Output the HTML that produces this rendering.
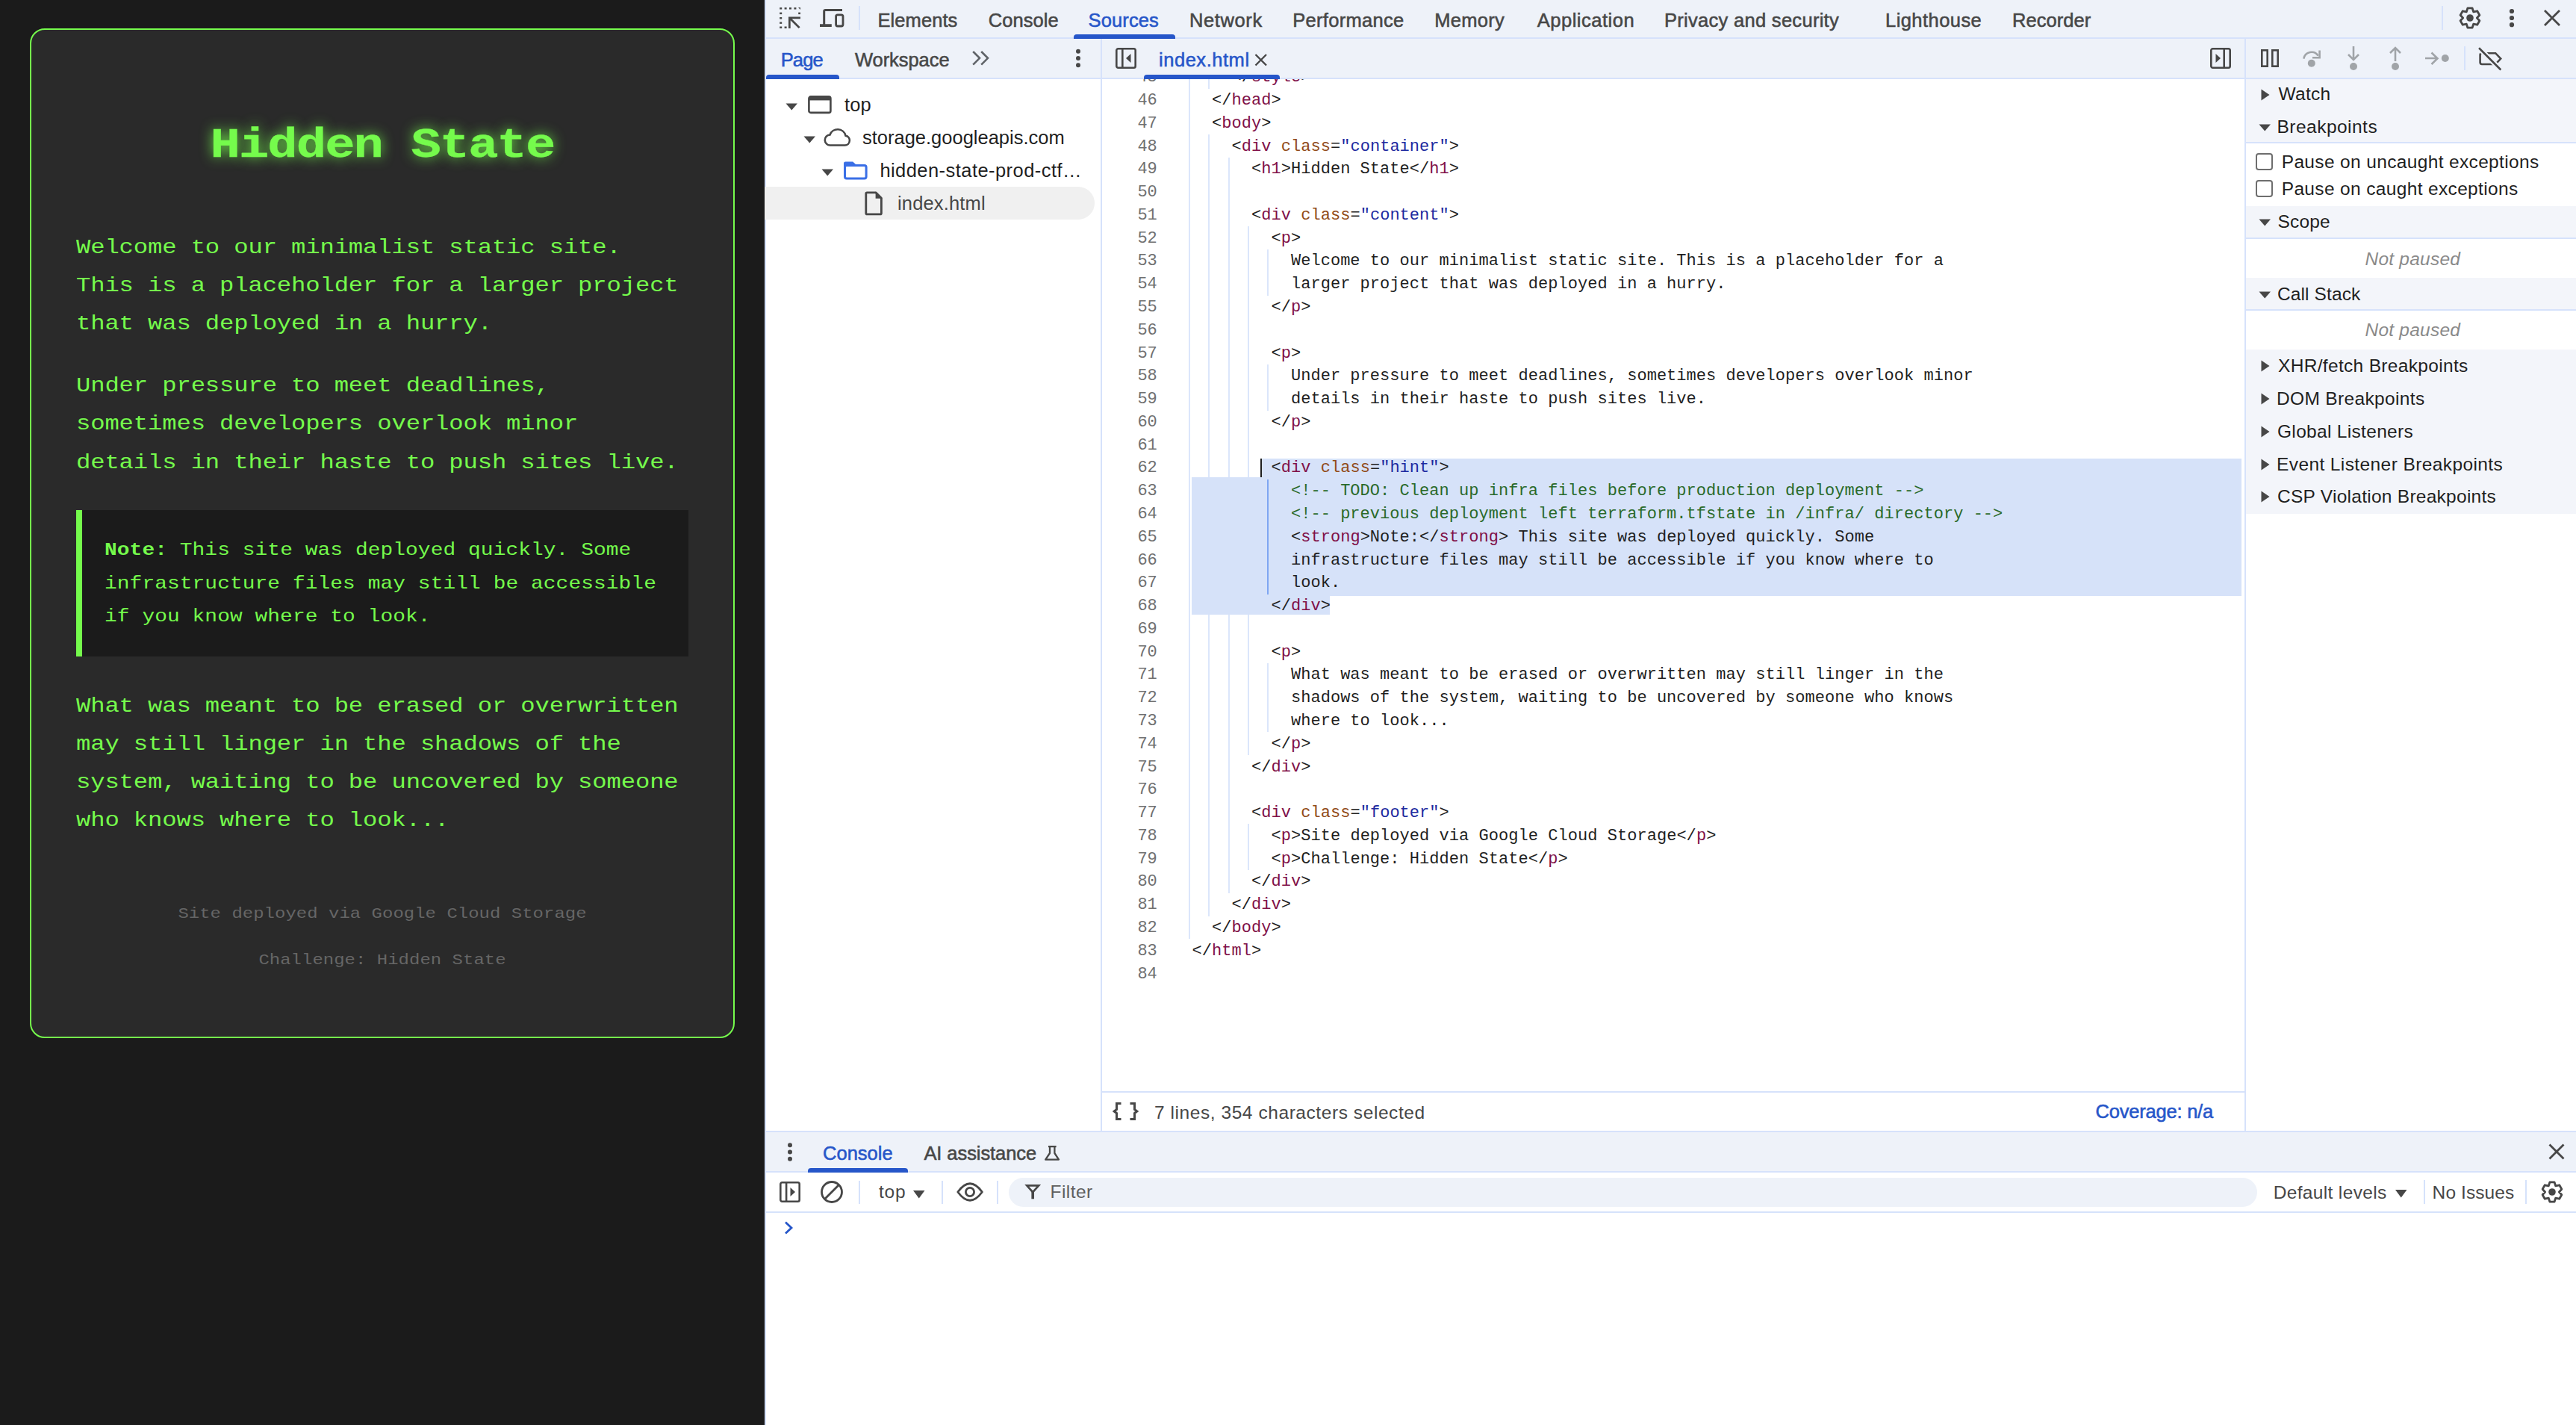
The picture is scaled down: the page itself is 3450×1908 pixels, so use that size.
<!DOCTYPE html><html><head><meta charset="utf-8"><style>html,body{margin:0;padding:0;width:3450px;height:1908px;overflow:hidden;background:#fff;position:relative}</style></head><body>
<div style="position:absolute;left:0px;top:0px;width:1024px;height:1908px;background:#1b1b1b;"></div>
<div style="position:absolute;left:40px;top:38px;width:940px;height:1348px;border:2px solid #75fb4c;border-radius:20px;background:#2a2a2a"></div>
<div style="position:absolute;left:-1488.00px;width:4000px;text-align:center;top:167.28px;font:normal 700 56px/56px 'Liberation Mono', monospace;color:#75fb4c;white-space:pre;letter-spacing:-1.6px;transform:scaleX(1.2);-webkit-text-stroke:0.3px #75fb4c;text-shadow:0 0 16px rgba(117,251,76,0.9)">Hidden State</div>
<div style="position:absolute;left:102.00px;top:317.54px;font:normal 400 28px/28px 'Liberation Mono', monospace;color:#75fb4c;white-space:pre;letter-spacing:-0.104px;;transform:scaleX(1.15);transform-origin:left">Welcome to our minimalist static site.</div>
<div style="position:absolute;left:102.00px;top:368.74px;font:normal 400 28px/28px 'Liberation Mono', monospace;color:#75fb4c;white-space:pre;letter-spacing:-0.104px;;transform:scaleX(1.15);transform-origin:left">This is a placeholder for a larger project</div>
<div style="position:absolute;left:102.00px;top:419.94px;font:normal 400 28px/28px 'Liberation Mono', monospace;color:#75fb4c;white-space:pre;letter-spacing:-0.104px;;transform:scaleX(1.15);transform-origin:left">that was deployed in a hurry.</div>
<div style="position:absolute;left:102.00px;top:503.14px;font:normal 400 28px/28px 'Liberation Mono', monospace;color:#75fb4c;white-space:pre;letter-spacing:-0.104px;;transform:scaleX(1.15);transform-origin:left">Under pressure to meet deadlines,</div>
<div style="position:absolute;left:102.00px;top:554.34px;font:normal 400 28px/28px 'Liberation Mono', monospace;color:#75fb4c;white-space:pre;letter-spacing:-0.104px;;transform:scaleX(1.15);transform-origin:left">sometimes developers overlook minor</div>
<div style="position:absolute;left:102.00px;top:605.54px;font:normal 400 28px/28px 'Liberation Mono', monospace;color:#75fb4c;white-space:pre;letter-spacing:-0.104px;;transform:scaleX(1.15);transform-origin:left">details in their haste to push sites live.</div>
<div style="position:absolute;left:102px;top:683.2px;width:820px;height:195.4px;background:#1b1b1b;border-left:8px solid #75fb4c;box-sizing:border-box"></div>
<div style="position:absolute;left:140.00px;top:724.85px;font:normal 400 24.2px/24.2px 'Liberation Mono', monospace;color:#75fb4c;white-space:pre;letter-spacing:0.089px;;transform:scaleX(1.15);transform-origin:left"><b>Note:</b> This site was deployed quickly. Some</div>
<div style="position:absolute;left:140.00px;top:769.65px;font:normal 400 24.2px/24.2px 'Liberation Mono', monospace;color:#75fb4c;white-space:pre;letter-spacing:0.089px;;transform:scaleX(1.15);transform-origin:left">infrastructure files may still be accessible</div>
<div style="position:absolute;left:140.00px;top:814.45px;font:normal 400 24.2px/24.2px 'Liberation Mono', monospace;color:#75fb4c;white-space:pre;letter-spacing:0.089px;;transform:scaleX(1.15);transform-origin:left">if you know where to look.</div>
<div style="position:absolute;left:102.00px;top:931.64px;font:normal 400 28px/28px 'Liberation Mono', monospace;color:#75fb4c;white-space:pre;letter-spacing:-0.104px;;transform:scaleX(1.15);transform-origin:left">What was meant to be erased or overwritten</div>
<div style="position:absolute;left:102.00px;top:982.84px;font:normal 400 28px/28px 'Liberation Mono', monospace;color:#75fb4c;white-space:pre;letter-spacing:-0.104px;;transform:scaleX(1.15);transform-origin:left">may still linger in the shadows of the</div>
<div style="position:absolute;left:102.00px;top:1034.04px;font:normal 400 28px/28px 'Liberation Mono', monospace;color:#75fb4c;white-space:pre;letter-spacing:-0.104px;;transform:scaleX(1.15);transform-origin:left">system, waiting to be uncovered by someone</div>
<div style="position:absolute;left:102.00px;top:1085.24px;font:normal 400 28px/28px 'Liberation Mono', monospace;color:#75fb4c;white-space:pre;letter-spacing:-0.104px;;transform:scaleX(1.15);transform-origin:left">who knows where to look...</div>
<div style="position:absolute;left:-1488.00px;width:4000px;text-align:center;top:1213.86px;font:normal 400 20.8px/20.8px 'Liberation Mono', monospace;color:#666666;white-space:pre;letter-spacing:0.042px;;transform:scaleX(1.15);transform-origin:center">Site deployed via Google Cloud Storage</div>
<div style="position:absolute;left:-1488.00px;width:4000px;text-align:center;top:1275.76px;font:normal 400 20.8px/20.8px 'Liberation Mono', monospace;color:#666666;white-space:pre;letter-spacing:0.042px;;transform:scaleX(1.15);transform-origin:center">Challenge: Hidden State</div>
<div style="position:absolute;left:1024px;top:0px;width:2426px;height:1908px;background:#ffffff;"></div>
<div style="position:absolute;left:1024px;top:0px;width:2px;height:1908px;background:#d6e2fb;"></div>
<div style="position:absolute;left:1026px;top:0px;width:2424px;height:50px;background:#eef2f9;"></div>
<div style="position:absolute;left:1026px;top:50px;width:2424px;height:2px;background:#d6e2fb;"></div>
<svg style="position:absolute;left:1044px;top:10px" width="28" height="28" viewBox="0 0 28 28"><g fill="#474747"><rect x="0.2" y="0" width="3" height="2.5"/><rect x="6.6" y="0" width="3" height="2.5"/><rect x="13" y="0" width="3" height="2.5"/><rect x="19.4" y="0" width="3" height="2.5"/><rect x="0.2" y="6.6" width="3" height="2.5"/><rect x="0.2" y="13" width="3" height="2.5"/><rect x="0.2" y="19.4" width="3" height="2.5"/><rect x="0.2" y="25.5" width="3" height="2.5"/><path d="M25 0 H28 V3 Z"/><rect x="25.2" y="6.6" width="2.8" height="2.5"/><rect x="6.6" y="25.5" width="3" height="2.5"/><path d="M0.2 25 V28 H3.2 Z" opacity="0"/></g><path d="M12 12.5 H28 V15.2 H16.6 L27.6 26.2 L25.6 28 L14.7 17.2 V28 H12 Z" fill="#474747"/></svg>
<svg style="position:absolute;left:1096px;top:10px" width="36" height="28" viewBox="0 0 36 28"><path d="M9.5 2 H32 V4.9 H9.2 V22.2 H17.8 V26 H2 V22.2 H6.2 V5.3 Q6.2 2 9.5 2 Z" fill="#474747"/><rect x="23.6" y="9.8" width="9.4" height="15.2" rx="2.2" fill="none" stroke="#474747" stroke-width="2.8"/></svg>
<div style="position:absolute;left:1150px;top:8px;width:2px;height:32px;background:#d6e2fb;"></div>
<div style="position:absolute;left:1438px;top:46px;width:136px;height:6px;background:#2656c9;border-radius:4px 4px 0 0"></div>
<div style="position:absolute;left:3270px;top:8px;width:2px;height:32px;background:#d6e2fb;"></div>
<svg style="position:absolute;left:3290px;top:6px" width="36" height="36" viewBox="0 0 36 36"><path d="M13.30 9.86 L14.87 4.97 L21.13 4.97 L22.70 9.86 L22.70 9.86 L27.72 8.78 L30.85 14.19 L27.40 18.00 L27.40 18.00 L30.85 21.81 L27.72 27.22 L22.70 26.14 L22.70 26.14 L21.13 31.03 L14.87 31.03 L13.30 26.14 L13.30 26.14 L8.28 27.22 L5.15 21.81 L8.60 18.00 L8.60 18.00 L5.15 14.19 L8.28 8.78 L13.30 9.86 Z" fill="none" stroke="#474747" stroke-width="2.8" stroke-linejoin="round"/><circle cx="18" cy="18" r="4.8" fill="#474747"/></svg>
<svg style="position:absolute;left:3354px;top:6px" width="20" height="36" viewBox="0 0 20 36"><g fill="#474747"><circle cx="10" cy="9" r="3.1"/><circle cx="10" cy="18" r="3.1"/><circle cx="10" cy="27.2" r="3.1"/></g></svg>
<svg style="position:absolute;left:3404px;top:10px" width="28" height="28" viewBox="0 0 28 28"><path d="M4 4 L24 24 M24 4 L4 24" stroke="#474747" stroke-width="2.8" fill="none"/></svg>
<div style="position:absolute;left:1026px;top:52px;width:2424px;height:52px;background:#eef2f9;"></div>
<div style="position:absolute;left:1026px;top:104px;width:2424px;height:2px;background:#d6e2fb;"></div>
<div style="position:absolute;left:1474px;top:52px;width:2px;height:1463px;background:#d6e2fb;"></div>
<div style="position:absolute;left:3006px;top:52px;width:2px;height:1463px;background:#d6e2fb;"></div>
<div style="position:absolute;left:1026px;top:100px;width:98px;height:6px;background:#2656c9;border-radius:4px 4px 0 0"></div>
<svg style="position:absolute;left:1300px;top:66px" width="28" height="24" viewBox="0 0 28 24"><path d="M3.2 3 L12 11.8 L3.2 20.6 M14.2 3 L23 11.8 L14.2 20.6" stroke="#5f6368" stroke-width="2.6" fill="none"/></svg>
<svg style="position:absolute;left:1434px;top:62px" width="20" height="32" viewBox="0 0 20 32"><g fill="#474747"><circle cx="10" cy="6.75" r="3"/><circle cx="10" cy="16" r="3"/><circle cx="10" cy="25.3" r="3"/></g></svg>
<svg style="position:absolute;left:1492px;top:62px" width="32" height="32" viewBox="0 0 32 32"><rect x="3.3" y="3.3" width="25.4" height="25.4" rx="2.2" fill="none" stroke="#474747" stroke-width="2.6"/><rect x="10" y="3.3" width="2.6" height="25.4" fill="#474747"/><path d="M22.5 10 V22 L16 16 Z" fill="#474747"/></svg>
<svg style="position:absolute;left:1678px;top:70px" width="22" height="22" viewBox="0 0 22 22"><path d="M3.5 3 L18 17.5 M18 3 L3.5 17.5" stroke="#474747" stroke-width="2.4" fill="none"/></svg>
<div style="position:absolute;left:1532px;top:100px;width:182px;height:6px;background:#2656c9;border-radius:4px 4px 0 0"></div>
<svg style="position:absolute;left:2958px;top:62px" width="32" height="32" viewBox="0 0 32 32"><rect x="3.3" y="3.3" width="25.4" height="25.4" rx="2.2" fill="none" stroke="#474747" stroke-width="2.6"/><rect x="19.4" y="3.3" width="2.6" height="25.4" fill="#474747"/><path d="M9.5 10 V22 L16 16 Z" fill="#474747"/></svg>
<svg style="position:absolute;left:3026px;top:64px" width="28" height="28" viewBox="0 0 28 28"><rect x="3.3" y="3.3" width="7.4" height="21.4" fill="none" stroke="#474747" stroke-width="2.6"/><rect x="17.3" y="3.3" width="7.4" height="21.4" fill="none" stroke="#474747" stroke-width="2.6"/></svg>
<svg style="position:absolute;left:3082px;top:62px" width="30" height="32" viewBox="0 0 30 32"><path d="M3.4 16.6 A10.5 10.5 0 0 1 22.6 12.6" stroke="#a0a4a8" stroke-width="2.6" fill="none"/><path d="M24.6 5.5 V15.2 H15" stroke="#a0a4a8" stroke-width="2.6" fill="none"/><circle cx="13.8" cy="22.8" r="5" fill="#a0a4a8"/></svg>
<svg style="position:absolute;left:3140px;top:60px" width="24" height="36" viewBox="0 0 24 36"><path d="M12 2 V20 M5 13 L12 20 L19 13" stroke="#a0a4a8" stroke-width="2.6" fill="none"/><circle cx="12" cy="29" r="5" fill="#a0a4a8"/></svg>
<svg style="position:absolute;left:3196px;top:60px" width="24" height="36" viewBox="0 0 24 36"><path d="M12 22 V4 M5 11 L12 4 L19 11" stroke="#a0a4a8" stroke-width="2.6" fill="none"/><circle cx="12" cy="29" r="5" fill="#a0a4a8"/></svg>
<svg style="position:absolute;left:3246px;top:62px" width="36" height="32" viewBox="0 0 36 32"><path d="M2 16 H18.5 M10.5 8.5 L18.5 16.3 L10.5 24" stroke="#a0a4a8" stroke-width="2.6" fill="none"/><circle cx="28.8" cy="16" r="5" fill="#a0a4a8"/></svg>
<div style="position:absolute;left:3300px;top:62px;width:2px;height:32px;background:#d6e2fb;"></div>
<svg style="position:absolute;left:3316px;top:62px" width="40" height="36" viewBox="0 0 40 36"><path d="M8 9.2 H26.2 L33.2 16.6 L26.2 24 H8 Q5.6 24 5.6 21.6 V11.6 Q5.6 9.2 8 9.2 Z" stroke="#474747" stroke-width="2.6" fill="none" stroke-linejoin="miter"/><path d="M4.4 2.6 L33 31.2" stroke="#eef2f9" stroke-width="7"/><path d="M5 3.2 L32.4 30.6" stroke="#474747" stroke-width="2.6" stroke-linecap="square"/></svg>
<svg style="position:absolute;left:1052px;top:137.5px" width="17" height="10" viewBox="0 0 17 10"><path d="M0.5 0.5 H16 L8.25 9.5 Z" fill="#474747"/></svg>
<svg style="position:absolute;left:1081px;top:127px" width="34" height="27" viewBox="0 0 34 27"><rect x="2.4" y="2.4" width="29" height="21.5" rx="2.5" fill="none" stroke="#474747" stroke-width="2.6"/><rect x="2.4" y="2.4" width="29" height="5" fill="#474747"/></svg>
<svg style="position:absolute;left:1076px;top:182px" width="17" height="10" viewBox="0 0 17 10"><path d="M0.5 0.5 H16 L8.25 9.5 Z" fill="#474747"/></svg>
<svg style="position:absolute;left:1102px;top:170px" width="40" height="28" viewBox="0 0 40 28"><path d="M10 24.5 H29.5 A6.5 6.5 0 0 0 30.5 11.6 A11 11 0 0 0 9.5 10.5 A7 7 0 0 0 10 24.5 Z" fill="none" stroke="#474747" stroke-width="2.6"/></svg>
<svg style="position:absolute;left:1100px;top:226px" width="17" height="10" viewBox="0 0 17 10"><path d="M0.5 0.5 H16 L8.25 9.5 Z" fill="#474747"/></svg>
<svg style="position:absolute;left:1128px;top:213px" width="36" height="30" viewBox="0 0 36 30"><rect x="3.5" y="8.6" width="28.6" height="17.4" rx="2.4" fill="none" stroke="#3a6fe6" stroke-width="3"/><path d="M2 10 V5.6 Q2 3.4 4.2 3.4 H14.2 L19.4 8.2 H30 V10 Z" fill="#3a6fe6"/></svg>
<div style="position:absolute;left:1024px;top:250px;width:442px;height:44px;background:#f0f0f0;border-radius:0 22px 22px 0"></div>
<svg style="position:absolute;left:1156px;top:254px" width="30" height="38" viewBox="0 0 30 38"><path d="M5.2 3.9 H17.2 L24.4 11.2 V31.4 Q24.4 32.8 23 32.8 H5.2 Q3.8 32.8 3.8 31.4 V5.3 Q3.8 3.9 5.2 3.9 Z" fill="none" stroke="#474747" stroke-width="2.8" stroke-linejoin="round"/><path d="M16.6 2.5 L25.8 11.8 H16.6 Z" fill="#474747"/></svg>
<div style="position:absolute;left:1476px;top:106px;width:1530px;height:1355px;overflow:hidden">
<div style="position:absolute;left:115.80px;top:-18.48px;width:2.00px;height:31.08px;background:#dbe6fb;"></div>
<div style="position:absolute;left:142.20px;top:-18.48px;width:2.00px;height:31.08px;background:#dbe6fb;"></div>
<div style="position:absolute;left:115.80px;top:12.30px;width:2.00px;height:31.08px;background:#dbe6fb;"></div>
<div style="position:absolute;left:115.80px;top:43.08px;width:2.00px;height:31.08px;background:#dbe6fb;"></div>
<div style="position:absolute;left:115.80px;top:73.86px;width:2.00px;height:31.08px;background:#dbe6fb;"></div>
<div style="position:absolute;left:142.20px;top:73.86px;width:2.00px;height:31.08px;background:#dbe6fb;"></div>
<div style="position:absolute;left:115.80px;top:104.64px;width:2.00px;height:31.08px;background:#dbe6fb;"></div>
<div style="position:absolute;left:142.20px;top:104.64px;width:2.00px;height:31.08px;background:#dbe6fb;"></div>
<div style="position:absolute;left:168.60px;top:104.64px;width:2.00px;height:31.08px;background:#dbe6fb;"></div>
<div style="position:absolute;left:115.80px;top:135.42px;width:2.00px;height:31.08px;background:#dbe6fb;"></div>
<div style="position:absolute;left:142.20px;top:135.42px;width:2.00px;height:31.08px;background:#dbe6fb;"></div>
<div style="position:absolute;left:168.60px;top:135.42px;width:2.00px;height:31.08px;background:#dbe6fb;"></div>
<div style="position:absolute;left:115.80px;top:166.20px;width:2.00px;height:31.08px;background:#dbe6fb;"></div>
<div style="position:absolute;left:142.20px;top:166.20px;width:2.00px;height:31.08px;background:#dbe6fb;"></div>
<div style="position:absolute;left:168.60px;top:166.20px;width:2.00px;height:31.08px;background:#dbe6fb;"></div>
<div style="position:absolute;left:115.80px;top:196.98px;width:2.00px;height:31.08px;background:#dbe6fb;"></div>
<div style="position:absolute;left:142.20px;top:196.98px;width:2.00px;height:31.08px;background:#dbe6fb;"></div>
<div style="position:absolute;left:168.60px;top:196.98px;width:2.00px;height:31.08px;background:#dbe6fb;"></div>
<div style="position:absolute;left:195.00px;top:196.98px;width:2.00px;height:31.08px;background:#dbe6fb;"></div>
<div style="position:absolute;left:115.80px;top:227.76px;width:2.00px;height:31.08px;background:#dbe6fb;"></div>
<div style="position:absolute;left:142.20px;top:227.76px;width:2.00px;height:31.08px;background:#dbe6fb;"></div>
<div style="position:absolute;left:168.60px;top:227.76px;width:2.00px;height:31.08px;background:#dbe6fb;"></div>
<div style="position:absolute;left:195.00px;top:227.76px;width:2.00px;height:31.08px;background:#dbe6fb;"></div>
<div style="position:absolute;left:221.40px;top:227.76px;width:2.00px;height:31.08px;background:#dbe6fb;"></div>
<div style="position:absolute;left:115.80px;top:258.54px;width:2.00px;height:31.08px;background:#dbe6fb;"></div>
<div style="position:absolute;left:142.20px;top:258.54px;width:2.00px;height:31.08px;background:#dbe6fb;"></div>
<div style="position:absolute;left:168.60px;top:258.54px;width:2.00px;height:31.08px;background:#dbe6fb;"></div>
<div style="position:absolute;left:195.00px;top:258.54px;width:2.00px;height:31.08px;background:#dbe6fb;"></div>
<div style="position:absolute;left:221.40px;top:258.54px;width:2.00px;height:31.08px;background:#dbe6fb;"></div>
<div style="position:absolute;left:115.80px;top:289.32px;width:2.00px;height:31.08px;background:#dbe6fb;"></div>
<div style="position:absolute;left:142.20px;top:289.32px;width:2.00px;height:31.08px;background:#dbe6fb;"></div>
<div style="position:absolute;left:168.60px;top:289.32px;width:2.00px;height:31.08px;background:#dbe6fb;"></div>
<div style="position:absolute;left:195.00px;top:289.32px;width:2.00px;height:31.08px;background:#dbe6fb;"></div>
<div style="position:absolute;left:115.80px;top:320.10px;width:2.00px;height:31.08px;background:#dbe6fb;"></div>
<div style="position:absolute;left:142.20px;top:320.10px;width:2.00px;height:31.08px;background:#dbe6fb;"></div>
<div style="position:absolute;left:168.60px;top:320.10px;width:2.00px;height:31.08px;background:#dbe6fb;"></div>
<div style="position:absolute;left:195.00px;top:320.10px;width:2.00px;height:31.08px;background:#dbe6fb;"></div>
<div style="position:absolute;left:115.80px;top:350.88px;width:2.00px;height:31.08px;background:#dbe6fb;"></div>
<div style="position:absolute;left:142.20px;top:350.88px;width:2.00px;height:31.08px;background:#dbe6fb;"></div>
<div style="position:absolute;left:168.60px;top:350.88px;width:2.00px;height:31.08px;background:#dbe6fb;"></div>
<div style="position:absolute;left:195.00px;top:350.88px;width:2.00px;height:31.08px;background:#dbe6fb;"></div>
<div style="position:absolute;left:115.80px;top:381.66px;width:2.00px;height:31.08px;background:#dbe6fb;"></div>
<div style="position:absolute;left:142.20px;top:381.66px;width:2.00px;height:31.08px;background:#dbe6fb;"></div>
<div style="position:absolute;left:168.60px;top:381.66px;width:2.00px;height:31.08px;background:#dbe6fb;"></div>
<div style="position:absolute;left:195.00px;top:381.66px;width:2.00px;height:31.08px;background:#dbe6fb;"></div>
<div style="position:absolute;left:221.40px;top:381.66px;width:2.00px;height:31.08px;background:#dbe6fb;"></div>
<div style="position:absolute;left:115.80px;top:412.44px;width:2.00px;height:31.08px;background:#dbe6fb;"></div>
<div style="position:absolute;left:142.20px;top:412.44px;width:2.00px;height:31.08px;background:#dbe6fb;"></div>
<div style="position:absolute;left:168.60px;top:412.44px;width:2.00px;height:31.08px;background:#dbe6fb;"></div>
<div style="position:absolute;left:195.00px;top:412.44px;width:2.00px;height:31.08px;background:#dbe6fb;"></div>
<div style="position:absolute;left:221.40px;top:412.44px;width:2.00px;height:31.08px;background:#dbe6fb;"></div>
<div style="position:absolute;left:115.80px;top:443.22px;width:2.00px;height:31.08px;background:#dbe6fb;"></div>
<div style="position:absolute;left:142.20px;top:443.22px;width:2.00px;height:31.08px;background:#dbe6fb;"></div>
<div style="position:absolute;left:168.60px;top:443.22px;width:2.00px;height:31.08px;background:#dbe6fb;"></div>
<div style="position:absolute;left:195.00px;top:443.22px;width:2.00px;height:31.08px;background:#dbe6fb;"></div>
<div style="position:absolute;left:115.80px;top:474.00px;width:2.00px;height:31.08px;background:#dbe6fb;"></div>
<div style="position:absolute;left:142.20px;top:474.00px;width:2.00px;height:31.08px;background:#dbe6fb;"></div>
<div style="position:absolute;left:168.60px;top:474.00px;width:2.00px;height:31.08px;background:#dbe6fb;"></div>
<div style="position:absolute;left:195.00px;top:474.00px;width:2.00px;height:31.08px;background:#dbe6fb;"></div>
<div style="position:absolute;left:115.80px;top:504.78px;width:2.00px;height:31.08px;background:#dbe6fb;"></div>
<div style="position:absolute;left:142.20px;top:504.78px;width:2.00px;height:31.08px;background:#dbe6fb;"></div>
<div style="position:absolute;left:168.60px;top:504.78px;width:2.00px;height:31.08px;background:#dbe6fb;"></div>
<div style="position:absolute;left:195.00px;top:504.78px;width:2.00px;height:31.08px;background:#dbe6fb;"></div>
<div style="position:absolute;left:115.80px;top:535.56px;width:2.00px;height:31.08px;background:#dbe6fb;"></div>
<div style="position:absolute;left:142.20px;top:535.56px;width:2.00px;height:31.08px;background:#dbe6fb;"></div>
<div style="position:absolute;left:168.60px;top:535.56px;width:2.00px;height:31.08px;background:#dbe6fb;"></div>
<div style="position:absolute;left:195.00px;top:535.56px;width:2.00px;height:31.08px;background:#dbe6fb;"></div>
<div style="position:absolute;left:221.40px;top:535.56px;width:2.00px;height:31.08px;background:#dbe6fb;"></div>
<div style="position:absolute;left:115.80px;top:566.34px;width:2.00px;height:31.08px;background:#dbe6fb;"></div>
<div style="position:absolute;left:142.20px;top:566.34px;width:2.00px;height:31.08px;background:#dbe6fb;"></div>
<div style="position:absolute;left:168.60px;top:566.34px;width:2.00px;height:31.08px;background:#dbe6fb;"></div>
<div style="position:absolute;left:195.00px;top:566.34px;width:2.00px;height:31.08px;background:#dbe6fb;"></div>
<div style="position:absolute;left:221.40px;top:566.34px;width:2.00px;height:31.08px;background:#dbe6fb;"></div>
<div style="position:absolute;left:115.80px;top:597.12px;width:2.00px;height:31.08px;background:#dbe6fb;"></div>
<div style="position:absolute;left:142.20px;top:597.12px;width:2.00px;height:31.08px;background:#dbe6fb;"></div>
<div style="position:absolute;left:168.60px;top:597.12px;width:2.00px;height:31.08px;background:#dbe6fb;"></div>
<div style="position:absolute;left:195.00px;top:597.12px;width:2.00px;height:31.08px;background:#dbe6fb;"></div>
<div style="position:absolute;left:221.40px;top:597.12px;width:2.00px;height:31.08px;background:#dbe6fb;"></div>
<div style="position:absolute;left:115.80px;top:627.90px;width:2.00px;height:31.08px;background:#dbe6fb;"></div>
<div style="position:absolute;left:142.20px;top:627.90px;width:2.00px;height:31.08px;background:#dbe6fb;"></div>
<div style="position:absolute;left:168.60px;top:627.90px;width:2.00px;height:31.08px;background:#dbe6fb;"></div>
<div style="position:absolute;left:195.00px;top:627.90px;width:2.00px;height:31.08px;background:#dbe6fb;"></div>
<div style="position:absolute;left:221.40px;top:627.90px;width:2.00px;height:31.08px;background:#dbe6fb;"></div>
<div style="position:absolute;left:115.80px;top:658.68px;width:2.00px;height:31.08px;background:#dbe6fb;"></div>
<div style="position:absolute;left:142.20px;top:658.68px;width:2.00px;height:31.08px;background:#dbe6fb;"></div>
<div style="position:absolute;left:168.60px;top:658.68px;width:2.00px;height:31.08px;background:#dbe6fb;"></div>
<div style="position:absolute;left:195.00px;top:658.68px;width:2.00px;height:31.08px;background:#dbe6fb;"></div>
<div style="position:absolute;left:221.40px;top:658.68px;width:2.00px;height:31.08px;background:#dbe6fb;"></div>
<div style="position:absolute;left:115.80px;top:689.46px;width:2.00px;height:31.08px;background:#dbe6fb;"></div>
<div style="position:absolute;left:142.20px;top:689.46px;width:2.00px;height:31.08px;background:#dbe6fb;"></div>
<div style="position:absolute;left:168.60px;top:689.46px;width:2.00px;height:31.08px;background:#dbe6fb;"></div>
<div style="position:absolute;left:195.00px;top:689.46px;width:2.00px;height:31.08px;background:#dbe6fb;"></div>
<div style="position:absolute;left:115.80px;top:720.24px;width:2.00px;height:31.08px;background:#dbe6fb;"></div>
<div style="position:absolute;left:142.20px;top:720.24px;width:2.00px;height:31.08px;background:#dbe6fb;"></div>
<div style="position:absolute;left:168.60px;top:720.24px;width:2.00px;height:31.08px;background:#dbe6fb;"></div>
<div style="position:absolute;left:195.00px;top:720.24px;width:2.00px;height:31.08px;background:#dbe6fb;"></div>
<div style="position:absolute;left:115.80px;top:751.02px;width:2.00px;height:31.08px;background:#dbe6fb;"></div>
<div style="position:absolute;left:142.20px;top:751.02px;width:2.00px;height:31.08px;background:#dbe6fb;"></div>
<div style="position:absolute;left:168.60px;top:751.02px;width:2.00px;height:31.08px;background:#dbe6fb;"></div>
<div style="position:absolute;left:195.00px;top:751.02px;width:2.00px;height:31.08px;background:#dbe6fb;"></div>
<div style="position:absolute;left:115.80px;top:781.80px;width:2.00px;height:31.08px;background:#dbe6fb;"></div>
<div style="position:absolute;left:142.20px;top:781.80px;width:2.00px;height:31.08px;background:#dbe6fb;"></div>
<div style="position:absolute;left:168.60px;top:781.80px;width:2.00px;height:31.08px;background:#dbe6fb;"></div>
<div style="position:absolute;left:195.00px;top:781.80px;width:2.00px;height:31.08px;background:#dbe6fb;"></div>
<div style="position:absolute;left:221.40px;top:781.80px;width:2.00px;height:31.08px;background:#dbe6fb;"></div>
<div style="position:absolute;left:115.80px;top:812.58px;width:2.00px;height:31.08px;background:#dbe6fb;"></div>
<div style="position:absolute;left:142.20px;top:812.58px;width:2.00px;height:31.08px;background:#dbe6fb;"></div>
<div style="position:absolute;left:168.60px;top:812.58px;width:2.00px;height:31.08px;background:#dbe6fb;"></div>
<div style="position:absolute;left:195.00px;top:812.58px;width:2.00px;height:31.08px;background:#dbe6fb;"></div>
<div style="position:absolute;left:221.40px;top:812.58px;width:2.00px;height:31.08px;background:#dbe6fb;"></div>
<div style="position:absolute;left:115.80px;top:843.36px;width:2.00px;height:31.08px;background:#dbe6fb;"></div>
<div style="position:absolute;left:142.20px;top:843.36px;width:2.00px;height:31.08px;background:#dbe6fb;"></div>
<div style="position:absolute;left:168.60px;top:843.36px;width:2.00px;height:31.08px;background:#dbe6fb;"></div>
<div style="position:absolute;left:195.00px;top:843.36px;width:2.00px;height:31.08px;background:#dbe6fb;"></div>
<div style="position:absolute;left:221.40px;top:843.36px;width:2.00px;height:31.08px;background:#dbe6fb;"></div>
<div style="position:absolute;left:115.80px;top:874.14px;width:2.00px;height:31.08px;background:#dbe6fb;"></div>
<div style="position:absolute;left:142.20px;top:874.14px;width:2.00px;height:31.08px;background:#dbe6fb;"></div>
<div style="position:absolute;left:168.60px;top:874.14px;width:2.00px;height:31.08px;background:#dbe6fb;"></div>
<div style="position:absolute;left:195.00px;top:874.14px;width:2.00px;height:31.08px;background:#dbe6fb;"></div>
<div style="position:absolute;left:115.80px;top:904.92px;width:2.00px;height:31.08px;background:#dbe6fb;"></div>
<div style="position:absolute;left:142.20px;top:904.92px;width:2.00px;height:31.08px;background:#dbe6fb;"></div>
<div style="position:absolute;left:168.60px;top:904.92px;width:2.00px;height:31.08px;background:#dbe6fb;"></div>
<div style="position:absolute;left:115.80px;top:935.70px;width:2.00px;height:31.08px;background:#dbe6fb;"></div>
<div style="position:absolute;left:142.20px;top:935.70px;width:2.00px;height:31.08px;background:#dbe6fb;"></div>
<div style="position:absolute;left:168.60px;top:935.70px;width:2.00px;height:31.08px;background:#dbe6fb;"></div>
<div style="position:absolute;left:115.80px;top:966.48px;width:2.00px;height:31.08px;background:#dbe6fb;"></div>
<div style="position:absolute;left:142.20px;top:966.48px;width:2.00px;height:31.08px;background:#dbe6fb;"></div>
<div style="position:absolute;left:168.60px;top:966.48px;width:2.00px;height:31.08px;background:#dbe6fb;"></div>
<div style="position:absolute;left:115.80px;top:997.26px;width:2.00px;height:31.08px;background:#dbe6fb;"></div>
<div style="position:absolute;left:142.20px;top:997.26px;width:2.00px;height:31.08px;background:#dbe6fb;"></div>
<div style="position:absolute;left:168.60px;top:997.26px;width:2.00px;height:31.08px;background:#dbe6fb;"></div>
<div style="position:absolute;left:195.00px;top:997.26px;width:2.00px;height:31.08px;background:#dbe6fb;"></div>
<div style="position:absolute;left:115.80px;top:1028.04px;width:2.00px;height:31.08px;background:#dbe6fb;"></div>
<div style="position:absolute;left:142.20px;top:1028.04px;width:2.00px;height:31.08px;background:#dbe6fb;"></div>
<div style="position:absolute;left:168.60px;top:1028.04px;width:2.00px;height:31.08px;background:#dbe6fb;"></div>
<div style="position:absolute;left:195.00px;top:1028.04px;width:2.00px;height:31.08px;background:#dbe6fb;"></div>
<div style="position:absolute;left:115.80px;top:1058.82px;width:2.00px;height:31.08px;background:#dbe6fb;"></div>
<div style="position:absolute;left:142.20px;top:1058.82px;width:2.00px;height:31.08px;background:#dbe6fb;"></div>
<div style="position:absolute;left:168.60px;top:1058.82px;width:2.00px;height:31.08px;background:#dbe6fb;"></div>
<div style="position:absolute;left:115.80px;top:1089.60px;width:2.00px;height:31.08px;background:#dbe6fb;"></div>
<div style="position:absolute;left:142.20px;top:1089.60px;width:2.00px;height:31.08px;background:#dbe6fb;"></div>
<div style="position:absolute;left:115.80px;top:1120.38px;width:2.00px;height:31.08px;background:#dbe6fb;"></div>
<div style="position:absolute;left:214.00px;top:508.30px;width:1312.00px;height:24.80px;background:#d6e2f9;"></div>
<div style="position:absolute;left:120.20px;top:533.10px;width:1405.80px;height:159.00px;background:#d6e2f9;"></div>
<div style="position:absolute;left:120.20px;top:692.10px;width:184.90px;height:24.70px;background:#d6e2f9;"></div>
<div style="position:absolute;left:221.00px;top:536.00px;width:2.00px;height:154.00px;background:#7fa6f2;"></div>
<div style="position:absolute;left:212.20px;top:508.30px;width:2.00px;height:24.80px;background:#1f1f1f;"></div>
<div style="position:absolute;left:120.50px;top:-12.84px;font:400 22px/22px 'Liberation Mono', monospace;color:#1f1f1f;white-space:pre;letter-spacing:0.04px">    &lt;/<span style="color:#801048">style</span>&gt;</div>
<div style="position:absolute;left:0px;width:73.80px;text-align:right;top:-12.84px;font:400 22px/22px 'Liberation Mono', monospace;color:#707070;white-space:pre">45</div>
<div style="position:absolute;left:120.50px;top:17.94px;font:400 22px/22px 'Liberation Mono', monospace;color:#1f1f1f;white-space:pre;letter-spacing:0.04px">  &lt;/<span style="color:#801048">head</span>&gt;</div>
<div style="position:absolute;left:0px;width:73.80px;text-align:right;top:17.94px;font:400 22px/22px 'Liberation Mono', monospace;color:#707070;white-space:pre">46</div>
<div style="position:absolute;left:120.50px;top:48.72px;font:400 22px/22px 'Liberation Mono', monospace;color:#1f1f1f;white-space:pre;letter-spacing:0.04px">  &lt;<span style="color:#801048">body</span>&gt;</div>
<div style="position:absolute;left:0px;width:73.80px;text-align:right;top:48.72px;font:400 22px/22px 'Liberation Mono', monospace;color:#707070;white-space:pre">47</div>
<div style="position:absolute;left:120.50px;top:79.50px;font:400 22px/22px 'Liberation Mono', monospace;color:#1f1f1f;white-space:pre;letter-spacing:0.04px">    &lt;<span style="color:#801048">div</span> <span style="color:#914a17">class</span>=<span style="color:#1d2aa0">"container"</span>&gt;</div>
<div style="position:absolute;left:0px;width:73.80px;text-align:right;top:79.50px;font:400 22px/22px 'Liberation Mono', monospace;color:#707070;white-space:pre">48</div>
<div style="position:absolute;left:120.50px;top:110.28px;font:400 22px/22px 'Liberation Mono', monospace;color:#1f1f1f;white-space:pre;letter-spacing:0.04px">      &lt;<span style="color:#801048">h1</span>&gt;Hidden State&lt;/<span style="color:#801048">h1</span>&gt;</div>
<div style="position:absolute;left:0px;width:73.80px;text-align:right;top:110.28px;font:400 22px/22px 'Liberation Mono', monospace;color:#707070;white-space:pre">49</div>
<div style="position:absolute;left:120.50px;top:141.06px;font:400 22px/22px 'Liberation Mono', monospace;color:#1f1f1f;white-space:pre;letter-spacing:0.04px"></div>
<div style="position:absolute;left:0px;width:73.80px;text-align:right;top:141.06px;font:400 22px/22px 'Liberation Mono', monospace;color:#707070;white-space:pre">50</div>
<div style="position:absolute;left:120.50px;top:171.84px;font:400 22px/22px 'Liberation Mono', monospace;color:#1f1f1f;white-space:pre;letter-spacing:0.04px">      &lt;<span style="color:#801048">div</span> <span style="color:#914a17">class</span>=<span style="color:#1d2aa0">"content"</span>&gt;</div>
<div style="position:absolute;left:0px;width:73.80px;text-align:right;top:171.84px;font:400 22px/22px 'Liberation Mono', monospace;color:#707070;white-space:pre">51</div>
<div style="position:absolute;left:120.50px;top:202.62px;font:400 22px/22px 'Liberation Mono', monospace;color:#1f1f1f;white-space:pre;letter-spacing:0.04px">        &lt;<span style="color:#801048">p</span>&gt;</div>
<div style="position:absolute;left:0px;width:73.80px;text-align:right;top:202.62px;font:400 22px/22px 'Liberation Mono', monospace;color:#707070;white-space:pre">52</div>
<div style="position:absolute;left:120.50px;top:233.40px;font:400 22px/22px 'Liberation Mono', monospace;color:#1f1f1f;white-space:pre;letter-spacing:0.04px">          Welcome to our minimalist static site. This is a placeholder for a</div>
<div style="position:absolute;left:0px;width:73.80px;text-align:right;top:233.40px;font:400 22px/22px 'Liberation Mono', monospace;color:#707070;white-space:pre">53</div>
<div style="position:absolute;left:120.50px;top:264.18px;font:400 22px/22px 'Liberation Mono', monospace;color:#1f1f1f;white-space:pre;letter-spacing:0.04px">          larger project that was deployed in a hurry.</div>
<div style="position:absolute;left:0px;width:73.80px;text-align:right;top:264.18px;font:400 22px/22px 'Liberation Mono', monospace;color:#707070;white-space:pre">54</div>
<div style="position:absolute;left:120.50px;top:294.96px;font:400 22px/22px 'Liberation Mono', monospace;color:#1f1f1f;white-space:pre;letter-spacing:0.04px">        &lt;/<span style="color:#801048">p</span>&gt;</div>
<div style="position:absolute;left:0px;width:73.80px;text-align:right;top:294.96px;font:400 22px/22px 'Liberation Mono', monospace;color:#707070;white-space:pre">55</div>
<div style="position:absolute;left:120.50px;top:325.74px;font:400 22px/22px 'Liberation Mono', monospace;color:#1f1f1f;white-space:pre;letter-spacing:0.04px"></div>
<div style="position:absolute;left:0px;width:73.80px;text-align:right;top:325.74px;font:400 22px/22px 'Liberation Mono', monospace;color:#707070;white-space:pre">56</div>
<div style="position:absolute;left:120.50px;top:356.52px;font:400 22px/22px 'Liberation Mono', monospace;color:#1f1f1f;white-space:pre;letter-spacing:0.04px">        &lt;<span style="color:#801048">p</span>&gt;</div>
<div style="position:absolute;left:0px;width:73.80px;text-align:right;top:356.52px;font:400 22px/22px 'Liberation Mono', monospace;color:#707070;white-space:pre">57</div>
<div style="position:absolute;left:120.50px;top:387.30px;font:400 22px/22px 'Liberation Mono', monospace;color:#1f1f1f;white-space:pre;letter-spacing:0.04px">          Under pressure to meet deadlines, sometimes developers overlook minor</div>
<div style="position:absolute;left:0px;width:73.80px;text-align:right;top:387.30px;font:400 22px/22px 'Liberation Mono', monospace;color:#707070;white-space:pre">58</div>
<div style="position:absolute;left:120.50px;top:418.08px;font:400 22px/22px 'Liberation Mono', monospace;color:#1f1f1f;white-space:pre;letter-spacing:0.04px">          details in their haste to push sites live.</div>
<div style="position:absolute;left:0px;width:73.80px;text-align:right;top:418.08px;font:400 22px/22px 'Liberation Mono', monospace;color:#707070;white-space:pre">59</div>
<div style="position:absolute;left:120.50px;top:448.86px;font:400 22px/22px 'Liberation Mono', monospace;color:#1f1f1f;white-space:pre;letter-spacing:0.04px">        &lt;/<span style="color:#801048">p</span>&gt;</div>
<div style="position:absolute;left:0px;width:73.80px;text-align:right;top:448.86px;font:400 22px/22px 'Liberation Mono', monospace;color:#707070;white-space:pre">60</div>
<div style="position:absolute;left:120.50px;top:479.64px;font:400 22px/22px 'Liberation Mono', monospace;color:#1f1f1f;white-space:pre;letter-spacing:0.04px"></div>
<div style="position:absolute;left:0px;width:73.80px;text-align:right;top:479.64px;font:400 22px/22px 'Liberation Mono', monospace;color:#707070;white-space:pre">61</div>
<div style="position:absolute;left:120.50px;top:510.42px;font:400 22px/22px 'Liberation Mono', monospace;color:#1f1f1f;white-space:pre;letter-spacing:0.04px">        &lt;<span style="color:#801048">div</span> <span style="color:#914a17">class</span>=<span style="color:#1d2aa0">"hint"</span>&gt;</div>
<div style="position:absolute;left:0px;width:73.80px;text-align:right;top:510.42px;font:400 22px/22px 'Liberation Mono', monospace;color:#707070;white-space:pre">62</div>
<div style="position:absolute;left:120.50px;top:541.20px;font:400 22px/22px 'Liberation Mono', monospace;color:#1f1f1f;white-space:pre;letter-spacing:0.04px">          <span style="color:#2a6a2a">&lt;!-- TODO: Clean up infra files before production deployment --&gt;</span></div>
<div style="position:absolute;left:0px;width:73.80px;text-align:right;top:541.20px;font:400 22px/22px 'Liberation Mono', monospace;color:#707070;white-space:pre">63</div>
<div style="position:absolute;left:120.50px;top:571.98px;font:400 22px/22px 'Liberation Mono', monospace;color:#1f1f1f;white-space:pre;letter-spacing:0.04px">          <span style="color:#2a6a2a">&lt;!-- previous deployment left terraform.tfstate in /infra/ directory --&gt;</span></div>
<div style="position:absolute;left:0px;width:73.80px;text-align:right;top:571.98px;font:400 22px/22px 'Liberation Mono', monospace;color:#707070;white-space:pre">64</div>
<div style="position:absolute;left:120.50px;top:602.76px;font:400 22px/22px 'Liberation Mono', monospace;color:#1f1f1f;white-space:pre;letter-spacing:0.04px">          &lt;<span style="color:#801048">strong</span>&gt;Note:&lt;/<span style="color:#801048">strong</span>&gt; This site was deployed quickly. Some</div>
<div style="position:absolute;left:0px;width:73.80px;text-align:right;top:602.76px;font:400 22px/22px 'Liberation Mono', monospace;color:#707070;white-space:pre">65</div>
<div style="position:absolute;left:120.50px;top:633.54px;font:400 22px/22px 'Liberation Mono', monospace;color:#1f1f1f;white-space:pre;letter-spacing:0.04px">          infrastructure files may still be accessible if you know where to</div>
<div style="position:absolute;left:0px;width:73.80px;text-align:right;top:633.54px;font:400 22px/22px 'Liberation Mono', monospace;color:#707070;white-space:pre">66</div>
<div style="position:absolute;left:120.50px;top:664.32px;font:400 22px/22px 'Liberation Mono', monospace;color:#1f1f1f;white-space:pre;letter-spacing:0.04px">          look.</div>
<div style="position:absolute;left:0px;width:73.80px;text-align:right;top:664.32px;font:400 22px/22px 'Liberation Mono', monospace;color:#707070;white-space:pre">67</div>
<div style="position:absolute;left:120.50px;top:695.10px;font:400 22px/22px 'Liberation Mono', monospace;color:#1f1f1f;white-space:pre;letter-spacing:0.04px">        &lt;/<span style="color:#801048">div</span>&gt;</div>
<div style="position:absolute;left:0px;width:73.80px;text-align:right;top:695.10px;font:400 22px/22px 'Liberation Mono', monospace;color:#707070;white-space:pre">68</div>
<div style="position:absolute;left:120.50px;top:725.88px;font:400 22px/22px 'Liberation Mono', monospace;color:#1f1f1f;white-space:pre;letter-spacing:0.04px"></div>
<div style="position:absolute;left:0px;width:73.80px;text-align:right;top:725.88px;font:400 22px/22px 'Liberation Mono', monospace;color:#707070;white-space:pre">69</div>
<div style="position:absolute;left:120.50px;top:756.66px;font:400 22px/22px 'Liberation Mono', monospace;color:#1f1f1f;white-space:pre;letter-spacing:0.04px">        &lt;<span style="color:#801048">p</span>&gt;</div>
<div style="position:absolute;left:0px;width:73.80px;text-align:right;top:756.66px;font:400 22px/22px 'Liberation Mono', monospace;color:#707070;white-space:pre">70</div>
<div style="position:absolute;left:120.50px;top:787.44px;font:400 22px/22px 'Liberation Mono', monospace;color:#1f1f1f;white-space:pre;letter-spacing:0.04px">          What was meant to be erased or overwritten may still linger in the</div>
<div style="position:absolute;left:0px;width:73.80px;text-align:right;top:787.44px;font:400 22px/22px 'Liberation Mono', monospace;color:#707070;white-space:pre">71</div>
<div style="position:absolute;left:120.50px;top:818.22px;font:400 22px/22px 'Liberation Mono', monospace;color:#1f1f1f;white-space:pre;letter-spacing:0.04px">          shadows of the system, waiting to be uncovered by someone who knows</div>
<div style="position:absolute;left:0px;width:73.80px;text-align:right;top:818.22px;font:400 22px/22px 'Liberation Mono', monospace;color:#707070;white-space:pre">72</div>
<div style="position:absolute;left:120.50px;top:849.00px;font:400 22px/22px 'Liberation Mono', monospace;color:#1f1f1f;white-space:pre;letter-spacing:0.04px">          where to look...</div>
<div style="position:absolute;left:0px;width:73.80px;text-align:right;top:849.00px;font:400 22px/22px 'Liberation Mono', monospace;color:#707070;white-space:pre">73</div>
<div style="position:absolute;left:120.50px;top:879.78px;font:400 22px/22px 'Liberation Mono', monospace;color:#1f1f1f;white-space:pre;letter-spacing:0.04px">        &lt;/<span style="color:#801048">p</span>&gt;</div>
<div style="position:absolute;left:0px;width:73.80px;text-align:right;top:879.78px;font:400 22px/22px 'Liberation Mono', monospace;color:#707070;white-space:pre">74</div>
<div style="position:absolute;left:120.50px;top:910.56px;font:400 22px/22px 'Liberation Mono', monospace;color:#1f1f1f;white-space:pre;letter-spacing:0.04px">      &lt;/<span style="color:#801048">div</span>&gt;</div>
<div style="position:absolute;left:0px;width:73.80px;text-align:right;top:910.56px;font:400 22px/22px 'Liberation Mono', monospace;color:#707070;white-space:pre">75</div>
<div style="position:absolute;left:120.50px;top:941.34px;font:400 22px/22px 'Liberation Mono', monospace;color:#1f1f1f;white-space:pre;letter-spacing:0.04px"></div>
<div style="position:absolute;left:0px;width:73.80px;text-align:right;top:941.34px;font:400 22px/22px 'Liberation Mono', monospace;color:#707070;white-space:pre">76</div>
<div style="position:absolute;left:120.50px;top:972.12px;font:400 22px/22px 'Liberation Mono', monospace;color:#1f1f1f;white-space:pre;letter-spacing:0.04px">      &lt;<span style="color:#801048">div</span> <span style="color:#914a17">class</span>=<span style="color:#1d2aa0">"footer"</span>&gt;</div>
<div style="position:absolute;left:0px;width:73.80px;text-align:right;top:972.12px;font:400 22px/22px 'Liberation Mono', monospace;color:#707070;white-space:pre">77</div>
<div style="position:absolute;left:120.50px;top:1002.90px;font:400 22px/22px 'Liberation Mono', monospace;color:#1f1f1f;white-space:pre;letter-spacing:0.04px">        &lt;<span style="color:#801048">p</span>&gt;Site deployed via Google Cloud Storage&lt;/<span style="color:#801048">p</span>&gt;</div>
<div style="position:absolute;left:0px;width:73.80px;text-align:right;top:1002.90px;font:400 22px/22px 'Liberation Mono', monospace;color:#707070;white-space:pre">78</div>
<div style="position:absolute;left:120.50px;top:1033.68px;font:400 22px/22px 'Liberation Mono', monospace;color:#1f1f1f;white-space:pre;letter-spacing:0.04px">        &lt;<span style="color:#801048">p</span>&gt;Challenge: Hidden State&lt;/<span style="color:#801048">p</span>&gt;</div>
<div style="position:absolute;left:0px;width:73.80px;text-align:right;top:1033.68px;font:400 22px/22px 'Liberation Mono', monospace;color:#707070;white-space:pre">79</div>
<div style="position:absolute;left:120.50px;top:1064.46px;font:400 22px/22px 'Liberation Mono', monospace;color:#1f1f1f;white-space:pre;letter-spacing:0.04px">      &lt;/<span style="color:#801048">div</span>&gt;</div>
<div style="position:absolute;left:0px;width:73.80px;text-align:right;top:1064.46px;font:400 22px/22px 'Liberation Mono', monospace;color:#707070;white-space:pre">80</div>
<div style="position:absolute;left:120.50px;top:1095.24px;font:400 22px/22px 'Liberation Mono', monospace;color:#1f1f1f;white-space:pre;letter-spacing:0.04px">    &lt;/<span style="color:#801048">div</span>&gt;</div>
<div style="position:absolute;left:0px;width:73.80px;text-align:right;top:1095.24px;font:400 22px/22px 'Liberation Mono', monospace;color:#707070;white-space:pre">81</div>
<div style="position:absolute;left:120.50px;top:1126.02px;font:400 22px/22px 'Liberation Mono', monospace;color:#1f1f1f;white-space:pre;letter-spacing:0.04px">  &lt;/<span style="color:#801048">body</span>&gt;</div>
<div style="position:absolute;left:0px;width:73.80px;text-align:right;top:1126.02px;font:400 22px/22px 'Liberation Mono', monospace;color:#707070;white-space:pre">82</div>
<div style="position:absolute;left:120.50px;top:1156.80px;font:400 22px/22px 'Liberation Mono', monospace;color:#1f1f1f;white-space:pre;letter-spacing:0.04px">&lt;/<span style="color:#801048">html</span>&gt;</div>
<div style="position:absolute;left:0px;width:73.80px;text-align:right;top:1156.80px;font:400 22px/22px 'Liberation Mono', monospace;color:#707070;white-space:pre">83</div>
<div style="position:absolute;left:120.50px;top:1187.58px;font:400 22px/22px 'Liberation Mono', monospace;color:#1f1f1f;white-space:pre;letter-spacing:0.04px"></div>
<div style="position:absolute;left:0px;width:73.80px;text-align:right;top:1187.58px;font:400 22px/22px 'Liberation Mono', monospace;color:#707070;white-space:pre">84</div>
</div>
<div style="position:absolute;left:1476px;top:1461px;width:1530px;height:2px;background:#d6e2fb;"></div>
<svg style="position:absolute;left:1490px;top:1475px" width="36" height="26" viewBox="0 0 36 26"><path d="M11.5 2.5 H5.5 V10.5 L2.2 13 L5.5 15.5 V23.5 H11.5 M23.5 2.5 H29.5 V10.5 L32.8 13 L29.5 15.5 V23.5 H23.5" fill="none" stroke="#474747" stroke-width="3" stroke-linejoin="miter"/></svg>
<div style="position:absolute;left:3008px;top:106px;width:442px;height:85px;background:#f3f5fa;"></div>
<div style="position:absolute;left:3008px;top:190px;width:442px;height:2px;background:#d6e2fb;"></div>
<div style="position:absolute;left:3008px;top:275.5px;width:442px;height:43px;background:#f3f5fa;"></div>
<div style="position:absolute;left:3008px;top:318px;width:442px;height:2px;background:#d6e2fb;"></div>
<div style="position:absolute;left:3008px;top:372.4px;width:442px;height:42px;background:#f3f5fa;"></div>
<div style="position:absolute;left:3008px;top:414px;width:442px;height:2px;background:#d6e2fb;"></div>
<div style="position:absolute;left:3008px;top:468px;width:442px;height:219.5px;background:#f3f5fa;"></div>
<svg style="position:absolute;left:3027.5px;top:119px" width="12" height="16" viewBox="0 0 12 16"><path d="M0.5 0.5 L11.5 8 L0.5 15.5 Z" fill="#474747"/></svg>
<svg style="position:absolute;left:3024.5px;top:166px" width="17" height="10" viewBox="0 0 17 10"><path d="M0.5 0.5 H16 L8.25 9.5 Z" fill="#474747"/></svg>
<div style="position:absolute;left:3021px;top:204.5px;width:19px;height:19px;border:2px solid #6e6e6e;border-radius:4px"></div>
<div style="position:absolute;left:3021px;top:240.6px;width:19px;height:19px;border:2px solid #6e6e6e;border-radius:4px"></div>
<svg style="position:absolute;left:3024.5px;top:293px" width="17" height="10" viewBox="0 0 17 10"><path d="M0.5 0.5 H16 L8.25 9.5 Z" fill="#474747"/></svg>
<svg style="position:absolute;left:3024.5px;top:389.5px" width="17" height="10" viewBox="0 0 17 10"><path d="M0.5 0.5 H16 L8.25 9.5 Z" fill="#474747"/></svg>
<svg style="position:absolute;left:3027.5px;top:482.0px" width="12" height="16" viewBox="0 0 12 16"><path d="M0.5 0.5 L11.5 8 L0.5 15.5 Z" fill="#474747"/></svg>
<svg style="position:absolute;left:3027.5px;top:525.85px" width="12" height="16" viewBox="0 0 12 16"><path d="M0.5 0.5 L11.5 8 L0.5 15.5 Z" fill="#474747"/></svg>
<svg style="position:absolute;left:3027.5px;top:569.7px" width="12" height="16" viewBox="0 0 12 16"><path d="M0.5 0.5 L11.5 8 L0.5 15.5 Z" fill="#474747"/></svg>
<svg style="position:absolute;left:3027.5px;top:613.55px" width="12" height="16" viewBox="0 0 12 16"><path d="M0.5 0.5 L11.5 8 L0.5 15.5 Z" fill="#474747"/></svg>
<svg style="position:absolute;left:3027.5px;top:657.4px" width="12" height="16" viewBox="0 0 12 16"><path d="M0.5 0.5 L11.5 8 L0.5 15.5 Z" fill="#474747"/></svg>
<div style="position:absolute;left:1026px;top:1514px;width:2424px;height:2px;background:#d6e2fb;"></div>
<div style="position:absolute;left:1026px;top:1516px;width:2424px;height:52px;background:#eef2f9;"></div>
<div style="position:absolute;left:1026px;top:1568px;width:2424px;height:2px;background:#d6e2fb;"></div>
<div style="position:absolute;left:1026px;top:1622px;width:2424px;height:2px;background:#d6e2fb;"></div>
<svg style="position:absolute;left:1048px;top:1526px" width="20" height="32" viewBox="0 0 20 32"><g fill="#474747"><circle cx="10" cy="7.2" r="3"/><circle cx="10" cy="16.5" r="3"/><circle cx="10" cy="25.8" r="3"/></g></svg>
<div style="position:absolute;left:1082px;top:1564px;width:134px;height:6px;background:#2656c9;border-radius:4px 4px 0 0"></div>
<svg style="position:absolute;left:1397px;top:1532px" width="24" height="24" viewBox="0 0 24 24"><path d="M7 3.2 H17.6 M9 3.2 V12 L3.2 20.6 H21 L15.4 12 V3.2" fill="none" stroke="#474747" stroke-width="2.3" stroke-linejoin="round"/></svg>
<svg style="position:absolute;left:3410px;top:1528px" width="28" height="28" viewBox="0 0 28 28"><path d="M4.5 4.5 L23.5 23.5 M23.5 4.5 L4.5 23.5" stroke="#474747" stroke-width="2.8" fill="none"/></svg>
<svg style="position:absolute;left:1042px;top:1580px" width="32" height="32" viewBox="0 0 32 32"><rect x="3.3" y="3.3" width="25.4" height="25.4" rx="2.2" fill="none" stroke="#474747" stroke-width="2.6"/><rect x="9.8" y="3.3" width="2.6" height="25.4" fill="#474747"/><path d="M16.5 10 V22 L23 16 Z" fill="#474747"/></svg>
<svg style="position:absolute;left:1096px;top:1580px" width="36" height="32" viewBox="0 0 36 32"><circle cx="18" cy="16" r="13.5" fill="none" stroke="#474747" stroke-width="2.8"/><path d="M27.5 6.5 L8.5 25.5" stroke="#474747" stroke-width="2.8"/></svg>
<div style="position:absolute;left:1150px;top:1580.5px;width:2px;height:31px;background:#d6e2fb;"></div>
<svg style="position:absolute;left:1222px;top:1593px" width="18" height="12" viewBox="0 0 18 12"><path d="M1 1 H16.5 L8.75 11.5 Z" fill="#474747"/></svg>
<div style="position:absolute;left:1261px;top:1580.5px;width:2px;height:31px;background:#d6e2fb;"></div>
<svg style="position:absolute;left:1278px;top:1580px" width="42" height="30" viewBox="0 0 42 30"><path d="M4.8 16 Q21 -6.5 37.4 16 Q21 38.5 4.8 16 Z" fill="none" stroke="#474747" stroke-width="2.8" stroke-linejoin="round"/><circle cx="21" cy="16" r="5.6" fill="none" stroke="#474747" stroke-width="2.8"/></svg>
<div style="position:absolute;left:1335px;top:1580.5px;width:2px;height:31px;background:#d6e2fb;"></div>
<div style="position:absolute;left:1350.7px;top:1576.6px;width:1672px;height:39px;background:#eef2f9;border-radius:20px"></div>
<svg style="position:absolute;left:1372px;top:1585px" width="24" height="24" viewBox="0 0 24 24"><path d="M3.2 2.4 H19.2 L11.2 11.2 Z" fill="none" stroke="#474747" stroke-width="2.6" stroke-linejoin="miter"/><rect x="9.4" y="10.5" width="3.6" height="9.8" fill="#474747"/></svg>
<svg style="position:absolute;left:3207px;top:1592px" width="18" height="12" viewBox="0 0 18 12"><path d="M1 1 H16.5 L8.75 11.5 Z" fill="#474747"/></svg>
<div style="position:absolute;left:3246px;top:1580px;width:2px;height:32px;background:#d6e2fb;"></div>
<div style="position:absolute;left:3382px;top:1580px;width:2px;height:32px;background:#d6e2fb;"></div>
<svg style="position:absolute;left:3400px;top:1578px" width="36" height="36" viewBox="0 0 36 36"><path d="M13.30 9.86 L14.87 4.97 L21.13 4.97 L22.70 9.86 L22.70 9.86 L27.72 8.78 L30.85 14.19 L27.40 18.00 L27.40 18.00 L30.85 21.81 L27.72 27.22 L22.70 26.14 L22.70 26.14 L21.13 31.03 L14.87 31.03 L13.30 26.14 L13.30 26.14 L8.28 27.22 L5.15 21.81 L8.60 18.00 L8.60 18.00 L5.15 14.19 L8.28 8.78 L13.30 9.86 Z" fill="none" stroke="#474747" stroke-width="2.8" stroke-linejoin="round"/><circle cx="18" cy="18" r="4.8" fill="#474747"/></svg>
<svg style="position:absolute;left:1048px;top:1634px" width="16" height="20" viewBox="0 0 16 20"><path d="M4 2.5 L12 10 L4 17.5" fill="none" stroke="#2656c9" stroke-width="2.8"/></svg>
<div style="position:absolute;left:1175.50px;top:14.61px;font:normal 400 25.5px/25.5px 'Liberation Sans', sans-serif;color:#474747;white-space:pre;letter-spacing:0.079px;-webkit-text-stroke:0.55px currentColor">Elements</div>
<div style="position:absolute;left:1323.70px;top:14.61px;font:normal 400 25.5px/25.5px 'Liberation Sans', sans-serif;color:#474747;white-space:pre;letter-spacing:0.054px;-webkit-text-stroke:0.55px currentColor">Console</div>
<div style="position:absolute;left:1457.60px;top:14.61px;font:normal 400 25.5px/25.5px 'Liberation Sans', sans-serif;color:#2656c9;white-space:pre;letter-spacing:0.117px;-webkit-text-stroke:0.55px currentColor">Sources</div>
<div style="position:absolute;left:1592.90px;top:14.61px;font:normal 400 25.5px/25.5px 'Liberation Sans', sans-serif;color:#474747;white-space:pre;letter-spacing:0.622px;-webkit-text-stroke:0.55px currentColor">Network</div>
<div style="position:absolute;left:1731.30px;top:14.61px;font:normal 400 25.5px/25.5px 'Liberation Sans', sans-serif;color:#474747;white-space:pre;letter-spacing:0.29px;-webkit-text-stroke:0.55px currentColor">Performance</div>
<div style="position:absolute;left:1921.20px;top:14.61px;font:normal 400 25.5px/25.5px 'Liberation Sans', sans-serif;color:#474747;white-space:pre;letter-spacing:0.292px;-webkit-text-stroke:0.55px currentColor">Memory</div>
<div style="position:absolute;left:2058.70px;top:14.61px;font:normal 400 25.5px/25.5px 'Liberation Sans', sans-serif;color:#474747;white-space:pre;letter-spacing:0.523px;-webkit-text-stroke:0.55px currentColor">Application</div>
<div style="position:absolute;left:2229.00px;top:14.61px;font:normal 400 25.5px/25.5px 'Liberation Sans', sans-serif;color:#474747;white-space:pre;letter-spacing:0.294px;-webkit-text-stroke:0.55px currentColor">Privacy and security</div>
<div style="position:absolute;left:2525.00px;top:14.61px;font:normal 400 25.5px/25.5px 'Liberation Sans', sans-serif;color:#474747;white-space:pre;letter-spacing:0.445px;-webkit-text-stroke:0.55px currentColor">Lighthouse</div>
<div style="position:absolute;left:2695.00px;top:14.61px;font:normal 400 25.5px/25.5px 'Liberation Sans', sans-serif;color:#474747;white-space:pre;letter-spacing:0.059px;-webkit-text-stroke:0.55px currentColor">Recorder</div>
<div style="position:absolute;left:1045.70px;top:67.96px;font:normal 400 25.5px/25.5px 'Liberation Sans', sans-serif;color:#2656c9;white-space:pre;letter-spacing:-0.857px;-webkit-text-stroke:0.55px currentColor">Page</div>
<div style="position:absolute;left:1145.00px;top:67.96px;font:normal 400 25.5px/25.5px 'Liberation Sans', sans-serif;color:#474747;white-space:pre;letter-spacing:-0.062px;-webkit-text-stroke:0.55px currentColor">Workspace</div>
<div style="position:absolute;left:1552.00px;top:68.21px;font:normal 400 25.5px/25.5px 'Liberation Sans', sans-serif;color:#2656c9;white-space:pre;letter-spacing:0.538px;-webkit-text-stroke:0.55px currentColor">index.html</div>
<div style="position:absolute;left:1131.00px;top:127.61px;font:normal 400 25.5px/25.5px 'Liberation Sans', sans-serif;color:#1f1f1f;white-space:pre;letter-spacing:0.117px;">top</div>
<div style="position:absolute;left:1155.00px;top:171.81px;font:normal 400 25.5px/25.5px 'Liberation Sans', sans-serif;color:#1f1f1f;white-space:pre;letter-spacing:-0.005px;">storage.googleapis.com</div>
<div style="position:absolute;left:1178.40px;top:216.21px;font:normal 400 25.5px/25.5px 'Liberation Sans', sans-serif;color:#1f1f1f;white-space:pre;letter-spacing:0.443px;">hidden-state-prod-ctf…</div>
<div style="position:absolute;left:1202.00px;top:260.21px;font:normal 400 25.5px/25.5px 'Liberation Sans', sans-serif;color:#474747;white-space:pre;letter-spacing:0.161px;">index.html</div>
<div style="position:absolute;left:1545.90px;top:1477.56px;font:normal 400 24.5px/24.5px 'Liberation Sans', sans-serif;color:#474747;white-space:pre;letter-spacing:0.57px;">7 lines, 354 characters selected</div>
<div style="position:absolute;left:2806.50px;top:1476.21px;font:normal 400 25.5px/25.5px 'Liberation Sans', sans-serif;color:#2656c9;white-space:pre;letter-spacing:-0.209px;-webkit-text-stroke:0.55px currentColor">Coverage: n/a</div>
<div style="position:absolute;left:3051.50px;top:114.06px;font:normal 400 24.5px/24.5px 'Liberation Sans', sans-serif;color:#1f1f1f;white-space:pre;letter-spacing:0.276px;">Watch</div>
<div style="position:absolute;left:3049.50px;top:157.76px;font:normal 400 24.5px/24.5px 'Liberation Sans', sans-serif;color:#1f1f1f;white-space:pre;letter-spacing:0.477px;">Breakpoints</div>
<div style="position:absolute;left:3055.70px;top:205.06px;font:normal 400 24.5px/24.5px 'Liberation Sans', sans-serif;color:#1f1f1f;white-space:pre;letter-spacing:0.351px;">Pause on uncaught exceptions</div>
<div style="position:absolute;left:3055.70px;top:241.16px;font:normal 400 24.5px/24.5px 'Liberation Sans', sans-serif;color:#1f1f1f;white-space:pre;letter-spacing:0.349px;">Pause on caught exceptions</div>
<div style="position:absolute;left:3050.50px;top:285.36px;font:normal 400 24.5px/24.5px 'Liberation Sans', sans-serif;color:#1f1f1f;white-space:pre;letter-spacing:0.164px;">Scope</div>
<div style="position:absolute;left:3167.50px;top:334.76px;font:italic 400 24.5px/24.5px 'Liberation Sans', sans-serif;color:#8a8a8a;white-space:pre;letter-spacing:0.235px;">Not paused</div>
<div style="position:absolute;left:3050.00px;top:381.66px;font:normal 400 24.5px/24.5px 'Liberation Sans', sans-serif;color:#1f1f1f;white-space:pre;letter-spacing:0.107px;">Call Stack</div>
<div style="position:absolute;left:3167.50px;top:430.26px;font:italic 400 24.5px/24.5px 'Liberation Sans', sans-serif;color:#8a8a8a;white-space:pre;letter-spacing:0.235px;">Not paused</div>
<div style="position:absolute;left:3051.00px;top:478.06px;font:normal 400 24.5px/24.5px 'Liberation Sans', sans-serif;color:#1f1f1f;white-space:pre;letter-spacing:0.321px;">XHR/fetch Breakpoints</div>
<div style="position:absolute;left:3049.00px;top:521.91px;font:normal 400 24.5px/24.5px 'Liberation Sans', sans-serif;color:#1f1f1f;white-space:pre;letter-spacing:0.35px;">DOM Breakpoints</div>
<div style="position:absolute;left:3050.00px;top:565.76px;font:normal 400 24.5px/24.5px 'Liberation Sans', sans-serif;color:#1f1f1f;white-space:pre;letter-spacing:0.314px;">Global Listeners</div>
<div style="position:absolute;left:3049.00px;top:609.61px;font:normal 400 24.5px/24.5px 'Liberation Sans', sans-serif;color:#1f1f1f;white-space:pre;letter-spacing:0.398px;">Event Listener Breakpoints</div>
<div style="position:absolute;left:3050.00px;top:653.46px;font:normal 400 24.5px/24.5px 'Liberation Sans', sans-serif;color:#1f1f1f;white-space:pre;letter-spacing:0.264px;">CSP Violation Breakpoints</div>
<div style="position:absolute;left:1102.00px;top:1532.21px;font:normal 400 25.5px/25.5px 'Liberation Sans', sans-serif;color:#2656c9;white-space:pre;letter-spacing:0.021px;-webkit-text-stroke:0.55px currentColor">Console</div>
<div style="position:absolute;left:1237.40px;top:1532.21px;font:normal 400 25.5px/25.5px 'Liberation Sans', sans-serif;color:#474747;white-space:pre;letter-spacing:-0.073px;-webkit-text-stroke:0.55px currentColor">AI assistance</div>
<div style="position:absolute;left:1177.00px;top:1583.86px;font:normal 400 24.5px/24.5px 'Liberation Sans', sans-serif;color:#474747;white-space:pre;letter-spacing:0.784px;">top</div>
<div style="position:absolute;left:1406.50px;top:1584.06px;font:normal 400 24.5px/24.5px 'Liberation Sans', sans-serif;color:#5f5f5f;white-space:pre;letter-spacing:0.443px;">Filter</div>
<div style="position:absolute;left:3044.70px;top:1585.26px;font:normal 400 24.5px/24.5px 'Liberation Sans', sans-serif;color:#474747;white-space:pre;letter-spacing:0.344px;">Default levels</div>
<div style="position:absolute;left:3257.60px;top:1585.26px;font:normal 400 24.5px/24.5px 'Liberation Sans', sans-serif;color:#474747;white-space:pre;letter-spacing:0.089px;">No Issues</div>
</body></html>
